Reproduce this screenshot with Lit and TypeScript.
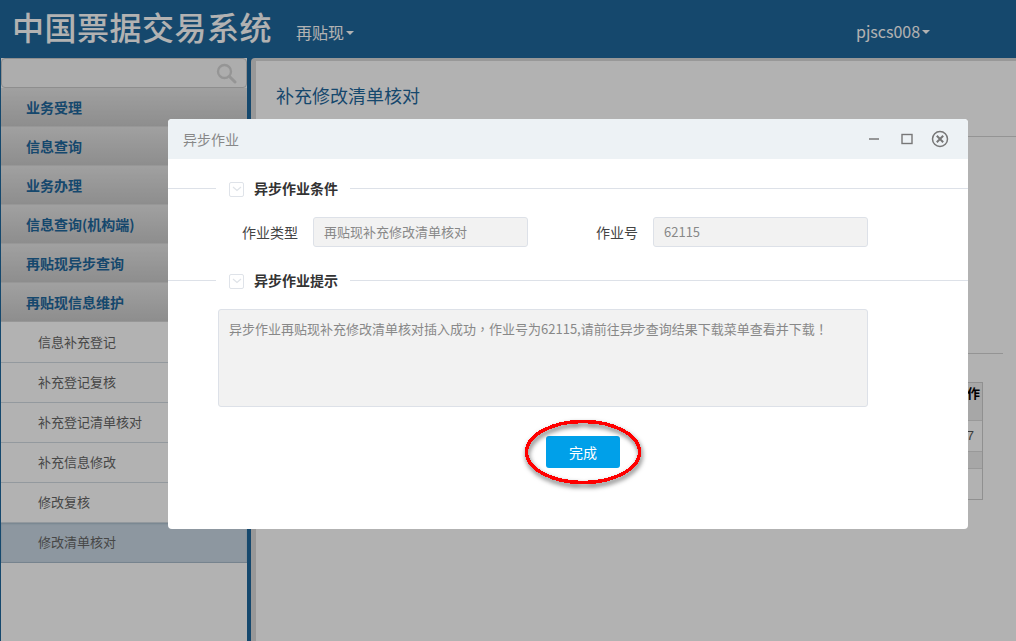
import { LitElement, html, css } from "lit";
import { customElement } from "lit/decorators.js";

const FONT = css`"Noto Sans CJK SC", "Liberation Sans", sans-serif`;

const GROUPS = ["业务受理", "信息查询", "业务办理", "信息查询(机构端)", "再贴现异步查询", "再贴现信息维护"];
const SUBS = ["信息补充登记", "补充登记复核", "补充登记清单核对", "补充信息修改", "修改复核", "修改清单核对"];

@customElement("app-root")
export class AppRoot extends LitElement {
  static styles = css`
    :host {
      display: block;
      position: relative;
      width: 1016px;
      height: 641px;
      overflow: hidden;
      font-family: ${FONT};
      font-size: 13px;
      background: #dcdcdc;
    }
    .header {
      height: 58px;
      background: #1f679c;
      color: #fff;
      display: flex;
      align-items: center;
    }
    .logo {
      margin: -7px 0 0 12px;
      font-size: 32px;
      letter-spacing: 0.5px;
      font-weight: 500;
      width: 284px;
      white-space: nowrap;
    }
    .menu {
      font-size: 16px;
      display: flex;
      align-items: center;
      gap: 2px;
      margin-top: 5px;
    }
    .user {
      margin-left: 502px;
      margin-top: 4px;
    }
    .caret {
      width: 0;
      height: 0;
      border-left: 4px solid transparent;
      border-right: 4px solid transparent;
      border-top: 4px solid #fff;
      margin-top: 2px;
    }
    .body {
      display: flex;
      height: 583px;
      background: #1f679c;
    }
    .side {
      width: 246px;
      margin-left: 1px;
      background: #fff;
      flex: none;
    }
    .search {
      height: 30px;
      box-sizing: border-box;
      background: #f8f8f8;
      border: 1px solid #ccc;
      border-radius: 4px;
      display: flex;
      justify-content: flex-end;
      align-items: center;
      padding-right: 9px;
    }
    .group {
      height: 39px;
      box-sizing: border-box;
      padding-left: 25px;
      display: flex;
      align-items: center;
      font-size: 14px;
      font-weight: 700;
      color: #1f679c;
      background: linear-gradient(#e6e6e6, #cbcbcb);
      border-bottom: 1px solid #d8d8d8;
    }
    .subs {
      padding-top: 1px;
    }
    .sub {
      height: 40px;
      box-sizing: border-box;
      padding: 0 0 3px 37px;
      display: flex;
      align-items: center;
      color: #666;
      border-bottom: 1px solid #d3dbe3;
    }
    .sub.on {
      background: #cbd9e5;
      border-bottom-color: #a9bccc;
      box-shadow: inset 0 1px 2px #a9bccc;
    }
    .divider {
      width: 4px;
      flex: none;
    }
    .main {
      flex: 1;
      min-width: 0;
      background: #fff;
      border-left: 5px solid #dadada;
      border-top: 3px solid #dadada;
      border-top-left-radius: 4px;
    }
    .title {
      height: 76px;
      box-sizing: border-box;
      padding: 21px 0 0 20px;
      font-size: 18px;
      line-height: 26px;
      color: #1f679c;
      border-bottom: 1px solid #d5d5d5;
    }
    .rule {
      margin: 216px 13px 0 0;
      height: 1px;
      background: #d5d5d5;
    }
    .table {
      margin: 28px 33px 0 auto;
      width: 60px;
      height: 118px;
      box-sizing: border-box;
      border: 1px solid #cfcfcf;
      display: flex;
      flex-direction: column;
      align-items: flex-end;
    }
    .cell {
      width: 100%;
      box-sizing: border-box;
      text-align: right;
      padding-right: 2px;
      border-bottom: 1px solid #dcdcdc;
    }
    .cell.head {
      height: 38px;
      background: #efefef;
      color: #000;
      font-weight: 700;
    }
    .cell.row {
      height: 31px;
      line-height: 30px;
      color: #555;
      padding-right: 8px;
      font-family: "Liberation Sans", sans-serif;
    }
    .cell.band {
      height: 17px;
      background: #efefef;
    }
    .overlay {
      position: absolute;
      inset: 0;
      background: rgba(0, 0, 0, 0.3);
    }
    .modal {
      position: absolute;
      left: 168px;
      top: 119px;
      width: 800px;
      height: 410px;
      background: #fff;
      border-radius: 4px;
      overflow: hidden;
    }
    .modal-head {
      height: 40px;
      background: #edf2f5;
      display: flex;
      align-items: center;
      padding-left: 15px;
      font-size: 14px;
      color: #888;
    }
    .tools {
      margin-left: auto;
      display: flex;
      align-items: center;
      gap: 13px;
      padding-right: 18px;
    }
    .tools svg {
      display: block;
    }
    .gap-top {
      height: 19px;
    }
    .gap-mid {
      height: 23px;
    }
    .legend {
      display: flex;
      align-items: center;
      color: #333;
      font-size: 14px;
      font-weight: 700;
      height: 20px;
    }
    .legend .line {
      height: 1px;
      background: #dde1e8;
    }
    .legend .left {
      width: 48px;
      margin-right: 13px;
    }
    .legend .right {
      flex: 1;
      margin-left: 12px;
    }
    .check {
      width: 15px;
      height: 15px;
      margin: 2px 10px 0 0;
      box-sizing: border-box;
      border: 1px solid #dfe3e9;
      border-radius: 2px;
      display: flex;
      align-items: center;
      justify-content: center;
    }
    .fields {
      display: flex;
      align-items: center;
      margin-top: 19px;
      height: 30px;
      font-size: 14px;
      color: #444;
    }
    .field-label {
      text-align: right;
      flex: none;
    }
    .w-type {
      width: 130px;
    }
    .w-no {
      width: 110px;
    }
    .input {
      height: 30px;
      width: 215px;
      margin-left: 15px;
      box-sizing: border-box;
      flex: none;
      background: #f2f2f2;
      border: 1px solid #dde1e8;
      border-radius: 3px;
      padding-left: 10px;
      line-height: 28px;
      font-size: 13px;
      color: #888;
    }
    .area {
      margin: 19px 0 0 50px;
      width: 650px;
      height: 98px;
      box-sizing: border-box;
      background: #f2f2f2;
      border: 1px solid #dde1e8;
      border-radius: 3px;
      padding: 10px;
      line-height: 18px;
      color: #888;
    }
    .tc {
      font-family: "Noto Sans CJK TC", sans-serif;
    }
    .actions {
      display: flex;
      justify-content: center;
      margin: 29px 0 0 30px;
    }
    .btn {
      width: 74px;
      height: 32px;
      background: #00a0e9;
      color: #fff;
      border: 0;
      border-radius: 3px;
      font: inherit;
      font-size: 14px;
      padding: 0;
    }
    .mark {
      position: absolute;
      left: 515px;
      top: 410px;
      overflow: visible;
    }
  `;

  render() {
    return html`
      <div class="header">
        <div class="logo">中国票据交易系统</div>
        <div class="menu">再贴现<span class="caret"></span></div>
        <div class="menu user">pjscs008<span class="caret"></span></div>
      </div>
      <div class="body">
        <div class="side">
          <div class="search">
            <svg width="21" height="21" viewBox="0 0 21 21" fill="none" stroke="#d6d6d6">
              <circle cx="8.5" cy="8.5" r="6.5" stroke-width="2.4" />
              <path d="M13.5 13.5L19 19" stroke-width="3" stroke-linecap="round" />
            </svg>
          </div>
          ${GROUPS.map((g) => html`<div class="group">${g}</div>`)}
          <div class="subs">
            ${SUBS.map((s, i) => html`<div class="sub ${i === 5 ? "on" : ""}">${s}</div>`)}
          </div>
        </div>
        <div class="divider"></div>
        <div class="main">
          <div class="title">补充修改清单核对</div>
          <div class="rule"></div>
          <div class="table">
            <div class="cell head">作</div>
            <div class="cell row">7</div>
            <div class="cell band"></div>
          </div>
        </div>
      </div>
      <div class="overlay"></div>
      <div class="modal">
        <div class="modal-head">
          异步作业
          <div class="tools">
            <svg width="20" height="20" viewBox="0 0 20 20" fill="none" stroke="#777" stroke-width="1.6">
              <path d="M5 10H15" />
            </svg>
            <svg width="20" height="20" viewBox="0 0 20 20" fill="none" stroke="#777" stroke-width="1.4">
              <rect x="5" y="5.5" width="10" height="9" />
            </svg>
            <svg width="20" height="20" viewBox="0 0 20 20" fill="none" stroke="#777" stroke-width="1.5">
              <circle cx="10" cy="10" r="7.5" />
              <path d="M6.8 6.8L13.2 13.2M13.2 6.8L6.8 13.2" stroke-width="2" />
            </svg>
          </div>
        </div>
        <div class="gap-top"></div>
        ${this.legend("异步作业条件")}
        <div class="fields">
          <div class="field-label w-type">作业类型</div>
          <div class="input">再贴现补充修改清单核对</div>
          <div class="field-label w-no">作业号</div>
          <div class="input">62115</div>
        </div>
        <div class="gap-mid"></div>
        ${this.legend("异步作业提示")}
        <div class="area">
          异步作业再贴现补充修改清单核对插入成功<span class="tc">，</span>作业号为62115,请前往异步查询结果下载菜单查看并下载<span class="tc">！</span>
        </div>
        <div class="actions"><button class="btn">完成</button></div>
      </div>
      <svg class="mark" width="136" height="84" viewBox="0 0 136 84" fill="none">
        <defs>
          <filter id="s" x="-20%" y="-30%" width="140%" height="160%">
            <feDropShadow dx="1" dy="3" stdDeviation="2.5" flood-color="#000" flood-opacity="0.6" />
          </filter>
        </defs>
        <ellipse cx="68" cy="42" rx="56.5" ry="30.5" stroke="#f00" stroke-width="3.5" shape-rendering="crispEdges" filter="url(#s)" />
      </svg>
    `;
  }

  legend(text: string) {
    return html`<div class="legend">
      <span class="line left"></span>
      <span class="check">
        <svg width="10" height="6" viewBox="0 0 10 6" fill="none" stroke="#dfe3e8" stroke-width="1.2">
          <path d="M1 1L5 4.5L9 1" />
        </svg>
      </span>
      ${text}
      <span class="line right"></span>
    </div>`;
  }
}
